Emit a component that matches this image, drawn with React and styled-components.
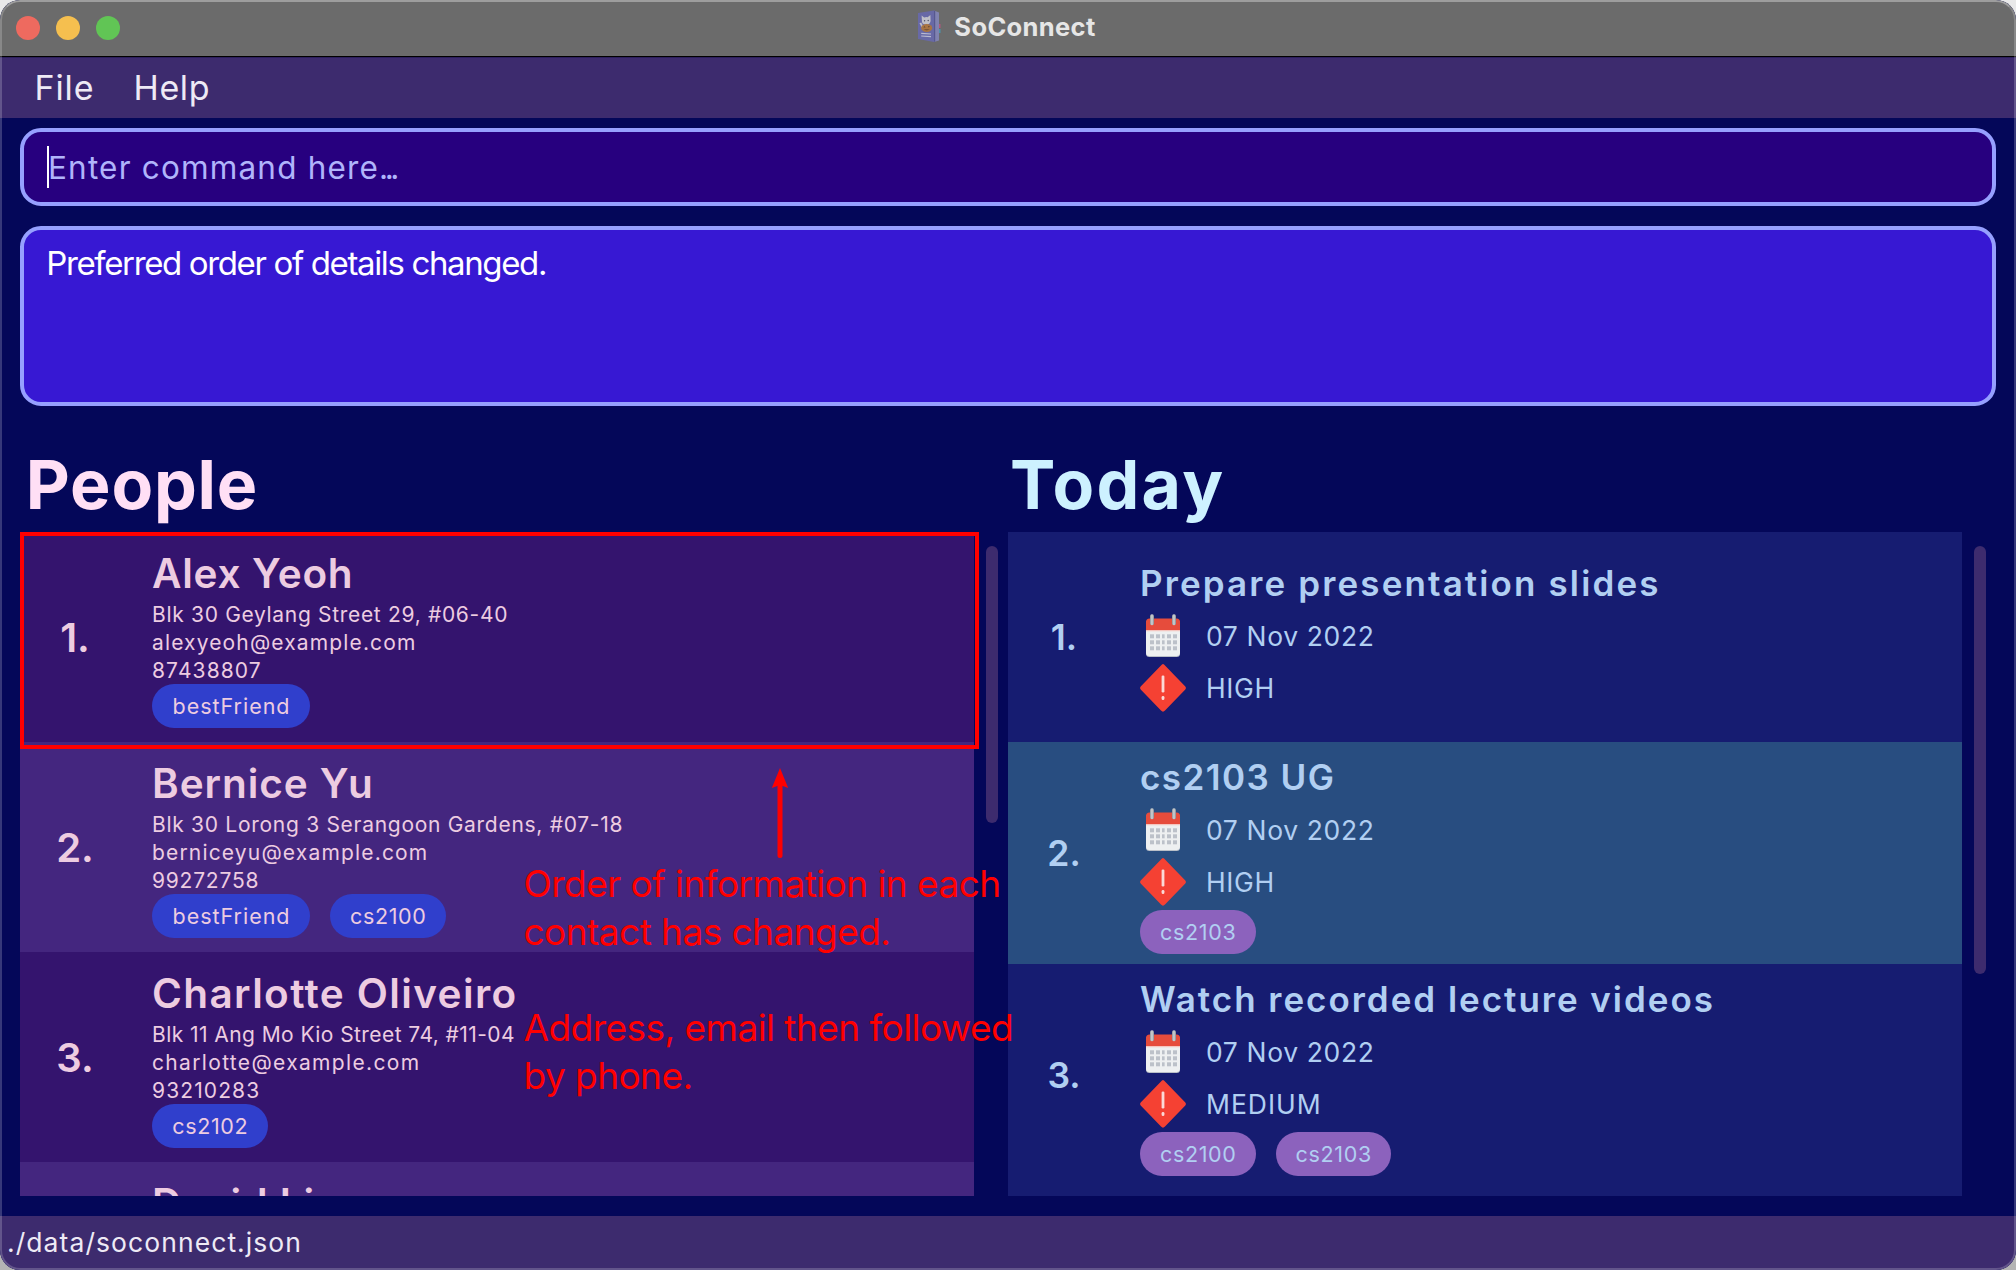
import React from "react";
import styled, { createGlobalStyle } from "styled-components";

const GlobalStyle = createGlobalStyle`
  * { box-sizing: border-box; }
  body {
    margin: 0;
    background: linear-gradient(#e9e9e9 0%, #e9e9e9 50%, #b4b4b4 51%, #b4b4b4 100%);
    font-family: Inter, "Liberation Sans", sans-serif;
  }
`;

const Window = styled.div`
  position: relative;
  display: flex;
  flex-direction: column;
  width: 2016px;
  height: 1270px;
  overflow: hidden;
  border-radius: 20px;
  background: #040759;
`;

const WindowEdge = styled.div`
  position: absolute;
  inset: 0;
  border: 2px solid rgba(255, 255, 255, 0.2);
  border-top-color: rgba(255, 255, 255, 0.34);
  border-radius: 20px;
  pointer-events: none;
`;

const TitleBar = styled.header`
  flex: none;
  display: grid;
  grid-template-columns: 1fr auto 1fr;
  align-items: center;
  height: 57px;
  padding: 0 16px;
  background: #6b6b6b;
  border-bottom: 1px solid #000;
`;

const TrafficLights = styled.div`
  display: flex;
  gap: 16px;
`;

const Light = styled.span`
  width: 24px;
  height: 24px;
  border-radius: 50%;
  background: ${(p) => p.$color};
`;

const Title = styled.div`
  display: flex;
  align-items: center;
  gap: 12px;
  height: 52px;
  margin-bottom: 4px;
  margin-right: 3px;
  color: #e6e6e6;
  font-size: 25.5px;
  font-weight: 700;
  letter-spacing: 0.35px;
`;

const MenuBar = styled.nav`
  flex: none;
  display: flex;
  align-items: center;
  gap: 39px;
  height: 61px;
  padding: 0 0 1px 34.4px;
  background: #3d2b6e;
  border-top: 1px solid #2c1f5c;
  color: #eeeaf5;
  font-size: 34px;
`;

const MenuItem = styled.span`
  letter-spacing: ${(p) => p.$track}px;
`;

const Content = styled.main`
  flex: 1;
  min-height: 0;
  display: flex;
  flex-direction: column;
  padding: 10px 20px 20px;
`;

const CommandBox = styled.div`
  flex: none;
  display: flex;
  align-items: center;
  height: 78px;
  padding-left: 23px;
  border: 4px solid #96a0ff;
  border-radius: 21px;
  background: #27007f;
  color: #b0b4fb;
  font-size: 31.5px;
  letter-spacing: 1.18px;
`;

const Caret = styled.span`
  width: 2px;
  height: 42px;
  margin-right: -1px;
  background: #fff;
`;

const Dots = styled.span`
  letter-spacing: -3.5px;
`;

const ResultBox = styled.div`
  flex: none;
  height: 180px;
  margin-top: 20px;
  padding: 13px 22.2px;
  border: 4px solid #96a0ff;
  border-radius: 21px;
  background: #3718d3;
  color: #fff;
  font-size: 33px;
  line-height: 40px;
  letter-spacing: -1.36px;
`;

const Panels = styled.div`
  flex: 1;
  min-height: 0;
  display: flex;
  gap: 10px;
  padding-top: 38px;
`;

const Panel = styled.section`
  display: flex;
  flex-direction: column;
  width: 978px;
  min-height: 0;
`;

const Heading = styled.h1`
  flex: none;
  margin: 0 0 8px;
  padding-left: ${(p) => p.$indent}px;
  color: ${(p) => p.$color};
  font-size: 68px;
  font-weight: 650;
  line-height: 80px;
  letter-spacing: ${(p) => p.$track}px;
`;

const Scroller = styled.div`
  flex: 1;
  min-height: 0;
  display: flex;
  gap: 12px;
`;

const List = styled.div`
  width: 954px;
  overflow: hidden;
`;

const Scrollbar = styled.div`
  width: 12px;
  height: ${(p) => p.$length}px;
  margin-top: 14px;
  border-radius: 6px;
  background: #3d2b6e;
`;

const PersonRow = styled.article`
  display: grid;
  grid-template-columns: 110px 1fr;
  column-gap: 22px;
  height: 210px;
  color: #edcce1;
  background: #34146e;
  &:nth-child(even) { background: #44267f; }
`;

const Index = styled.div`
  align-self: center;
  padding: 1px 0 0 0;
  text-align: center;
  font-size: ${(p) => p.$size}px;
  font-weight: 640;
`;

const PersonBody = styled.div`
  padding-top: 18px;
`;

const PersonName = styled.div`
  margin-bottom: 3px;
  font-size: 40.5px;
  font-weight: 630;
  line-height: 48px;
  letter-spacing: ${(p) => p.$track - 0.6}px;
`;

const Detail = styled.div`
  font-size: 21px;
  line-height: 28px;
  letter-spacing: ${(p) => p.$track - 0.54}px;
`;

const Tags = styled.div`
  display: flex;
  gap: 20px;
  margin-top: ${(p) => p.$offset}px;
`;

const Tag = styled.span`
  width: ${(p) => p.$width}px;
  height: 44px;
  padding-left: 1px;
  border-radius: 22px;
  background: ${(p) => p.$color};
  font-size: 21.5px;
  line-height: 45px;
  letter-spacing: ${(p) => p.$track}px;
  text-align: center;
`;

const TaskRow = styled.article`
  display: grid;
  grid-template-columns: 112px 1fr;
  column-gap: 20px;
  height: ${(p) => p.$height}px;
  padding-bottom: ${(p) => p.$bottom || 0}px;
  color: #b1cff2;
  background: #161c71;
  &:nth-child(even) { background: #284d80; }
`;

const TaskBody = styled.div`
  padding-top: ${(p) => p.$top}px;
`;

const TaskName = styled.div`
  margin-bottom: 6px;
  font-size: 35px;
  font-weight: 620;
  line-height: 42px;
  letter-spacing: ${(p) => p.$track}px;
`;

const Meta = styled.div`
  display: flex;
  align-items: center;
  gap: 20px;
  height: 52px;
  font-size: 26.5px;
  letter-spacing: ${(p) => p.$track - 0.62}px;
`;

const StatusBar = styled.footer`
  flex: none;
  height: 54px;
  padding-left: 7px;
  background: #3d2b6e;
  color: #eeeaf5;
  font-size: 26.5px;
  line-height: 53px;
  letter-spacing: 1.07px;
`;

const Highlight = styled.div`
  position: absolute;
  left: 20px;
  top: 532px;
  width: 959px;
  height: 217px;
  border: 4px solid #f00;
`;

const Arrow = styled.svg`
  position: absolute;
  left: 770px;
  top: 768px;
`;

const Note = styled.div`
  position: absolute;
  left: 523.5px;
  top: 860px;
  color: #f00;
  font-size: 37px;
  line-height: 48px;
  letter-spacing: -0.54px;
  white-space: nowrap;
`;

const NoteParagraph = styled.p`
  margin: 0 0 48px;
`;

const BookIcon = () => (
  <svg width="25" height="33" viewBox="0 0 25 33">
    <path d="M1 3 L17 .5 L17 32 L1 29 Z" fill="#6869a6" />
    <path d="M17 .5 L22 2.5 L22 30.5 L17 32 Z" fill="#8082b0" />
    <path d="M17 .5 L18.2 1 V31.6 L17 32 Z" fill="#57588f" />
    <path d="M22 14h1.5v4H22z" fill="#b0597f" />
    <path d="M22 19h1.5v4H22z" fill="#4b93ad" />
    <path d="M5 12 L4.6 5.5 L7.2 7.4 Q9 6.8 10.6 7.2 L13.4 5 L13.6 11 Q13 14.6 9.4 14.8 Q5.6 14.6 5 12Z" fill="#bfbfc8" />
    <path d="M2.5 13.2 L4.2 12.6 L6 16 L4.6 17.2Z" fill="#bfbfc8" />
    <circle cx="7.6" cy="10.8" r=".7" fill="#4d4d66" />
    <circle cx="11.2" cy="10.5" r=".7" fill="#4d4d66" />
    <ellipse cx="9.7" cy="18" rx="5.6" ry="4" fill="#a87443" />
    <path d="M6.4 17.2l1.2-1 .9 1.2zM10.8 17.3l1-1.3 1.1 1zM6.6 19q3 2.6 6.2 0-3 1-6.2 0" fill="#523b30" />
    <path d="M4.2 23.4 L14 24 M4.2 26 L14 26.7" stroke="#b9bad0" strokeWidth="1.2" />
  </svg>
);

const CalendarIcon = () => (
  <svg width="46" height="48" viewBox="0 0 46 48">
    <defs>
      <linearGradient id="ring" x1="0" x2="1">
        <stop offset="0" stopColor="#8e9499" />
        <stop offset=".5" stopColor="#d3d7da" />
        <stop offset="1" stopColor="#83898f" />
      </linearGradient>
    </defs>
    <rect x="6" y="8" width="34" height="37" rx="3.5" fill="#b9bfc8" />
    <path d="M6 15h34v25.5a3.5 3.5 0 0 1-3.5 3.5h-27A3.5 3.5 0 0 1 6 40.500z" fill="#eef0f1" />
    <path d="M6 18V10a3.500 3.500 0 0 1 3.500-3.500h27A3.500 3.500 0 0 1 40 10v8z" fill="#e64c3c" />
    <path d="M6 18h34v1.200H6z" fill="#f5c5bf" />
    {[22.3, 28.3, 34.300].map((y) =>
      [10, 16, 22, 27, 33].map((x) => (
        <rect key={`${x}-${y}`} x={x} y={y} width={x === 22 ? 2.600 : 4} height="4" fill="#bcc1c9" />
      ))
    )}
    <rect x="10" y="2.200" width="4" height="11" rx="1.800" fill="url(#ring)" />
    <rect x="32" y="2.200" width="4" height="11" rx="1.800" fill="url(#ring)" />
  </svg>
);

const PriorityIcon = () => (
  <svg width="46" height="48" viewBox="0 0 46 48">
    <path d="M23 0 Q24 0 25 1.500 L45.300 22.500 Q46.500 24 45.300 25.500 L25 46.500 Q23 48.800 21 46.500 L.7 25.500 Q-.5 24 .7 22.500 L21 1.500 Q22 0 23 0Z" fill="#f54133" />
    <rect x="21.600" y="11.500" width="2.800" height="17" rx="1.200" fill="#fbd9d6" />
    <rect x="21.600" y="32" width="2.800" height="4" rx="1.300" fill="#fbd9d6" />
  </svg>
);

const people = [
  {
    name: ["Alex Yeoh", 1.34],
    details: [["Blk 30 Geylang Street 29, #06-40", 1.22], ["alexyeoh@example.com", 1.68], ["87438807", 1.65]],
    tags: ["bestFriend"],
  },
  {
    name: ["Bernice Yu", 1.55],
    details: [["Blk 30 Lorong 3 Serangoon Gardens, #07-18", 1.25], ["berniceyu@example.com", 1.71], ["99272758", 1.32]],
    tags: ["bestFriend", "cs2100"],
  },
  {
    name: ["Charlotte Oliveiro", 1.98],
    details: [["Blk 11 Ang Mo Kio Street 74, #11-04", 0.97], ["charlotte@example.com", 1.88], ["93210283", 1.65]],
    tags: ["cs2102"],
  },
  {
    name: ["David Li", 1.6],
    details: [],
    tags: [],
  },
];

const tasks = [
  { name: ["Prepare presentation slides", 2.12], date: "07 Nov 2022", priority: ["HIGH", 1.26], tags: [], height: 210, top: 30 },
  { name: ["cs2103 UG", 1.45], date: "07 Nov 2022", priority: ["HIGH", 1.26], tags: ["cs2103"], height: 222, top: 14 },
  { name: ["Watch recorded lecture videos", 1.97], date: "07 Nov 2022", priority: ["MEDIUM", 1.6], tags: ["cs2100", "cs2103"], height: 232, bottom: 10, top: 14 },
];

const TagList = ({ tags, color, offset }) => (
  <Tags $offset={offset}>
    {tags.map((t) => (
      <Tag key={t} $color={color} $width={t === "bestFriend" ? 158 : 115.5} $track={t === "bestFriend" ? 0.98 : 0.66}>
        {t}
      </Tag>
    ))}
  </Tags>
);

const Person = ({ person, index }) => (
  <PersonRow>
    <Index $size={40}>{person.details.length > 0 && `${index}.`}</Index>
    <PersonBody>
      <PersonName $track={person.name[1]}>{person.name[0]}</PersonName>
      {person.details.map(([text, track]) => (
        <Detail key={text} $track={track}>{text}</Detail>
      ))}
      <TagList tags={person.tags} color="#303fcc" offset={-1} />
    </PersonBody>
  </PersonRow>
);

const Task = ({ task, index }) => (
  <TaskRow $height={task.height} $bottom={task.bottom}>
    <Index $size={35.5}>{index}.</Index>
    <TaskBody $top={task.top}>
      <TaskName $track={task.name[1]}>{task.name[0]}</TaskName>
      <Meta $track={1.26}><CalendarIcon />{task.date}</Meta>
      <Meta $track={task.priority[1]}><PriorityIcon />{task.priority[0]}</Meta>
      <TagList tags={task.tags} color="#8c62bd" offset={2} />
    </TaskBody>
  </TaskRow>
);

export default function App() {
  return (
    <>
      <GlobalStyle />
      <Window>
        <TitleBar>
          <TrafficLights>
            <Light $color="#ee6a5f" />
            <Light $color="#f5bf4f" />
            <Light $color="#61c555" />
          </TrafficLights>
          <Title><BookIcon />SoConnect</Title>
        </TitleBar>
        <MenuBar>
          <MenuItem $track={0.95}>File</MenuItem>
          <MenuItem $track={0.6}>Help</MenuItem>
        </MenuBar>
        <Content>
          <CommandBox>
            <Caret />
            Enter command here<Dots>...</Dots>
          </CommandBox>
          <ResultBox>Preferred order of details changed.</ResultBox>
          <Panels>
            <Panel>
              <Heading $color="#ffdff5" $indent={5.8} $track={0.8}>People</Heading>
              <Scroller>
                <List>
                  {people.map((p, i) => <Person key={p.name[0]} person={p} index={i + 1} />)}
                </List>
                <Scrollbar $length={277} />
              </Scroller>
            </Panel>
            <Panel>
              <Heading $color="#cdf1ff" $indent={2} $track={2.3}>Today</Heading>
              <Scroller>
                <List>
                  {tasks.map((t, i) => <Task key={t.name[0]} task={t} index={i + 1} />)}
                </List>
                <Scrollbar $length={428} />
              </Scroller>
            </Panel>
          </Panels>
        </Content>
        <StatusBar>./data/soconnect.json</StatusBar>
        <Highlight />
        <Arrow width="20" height="92" viewBox="0 0 20 92">
          <path d="M10 0 L18.200 20 L10 17 L1.800 20 Z" fill="#f00" />
          <path d="M10 15 V87.500" stroke="#f00" strokeWidth="5" strokeLinecap="round" />
        </Arrow>
        <Note>
          <NoteParagraph>Order of information in each<br />contact has changed.</NoteParagraph>
          <NoteParagraph>Address, email then followed<br />by phone.</NoteParagraph>
        </Note>
        <WindowEdge />
      </Window>
    </>
  );
}
